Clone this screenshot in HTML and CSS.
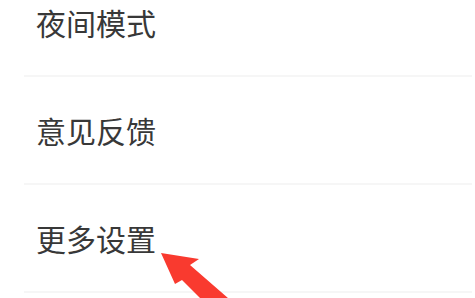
FILE: index.html
```html
<!DOCTYPE html>
<html lang="zh-CN">
<head>
<meta charset="utf-8">
<title>设置</title>
<link rel="stylesheet" href="styles.css">
</head>
<body>
<div class="page">
  <ul class="menu">
    <li class="menu-item"><span class="label">夜间模式</span></li>
    <li class="menu-item"><span class="label">意见反馈</span></li>
    <li class="menu-item"><span class="label">更多设置</span></li>
  </ul>
  <svg class="arrow" width="475" height="298" viewBox="0 0 475 298" aria-hidden="true">
    <polygon points="161,253 199,259 190,265 236,305 207,305 182,280 175,284" fill="#f93a2f"/>
  </svg>
</div>
</body>
</html>
```
FILE: styles.css
```css
html, body {
  margin: 0;
  padding: 0;
  background: #ffffff;
}
.page {
  position: relative;
  width: 475px;
  height: 298px;
  overflow: hidden;
  font-family: "Noto Sans CJK SC", "Noto Sans", sans-serif;
}
.menu {
  list-style: none;
  margin: -31px 0 0 0;
  padding: 0 3px 0 24px;
}
.menu-item {
  display: flex;
  align-items: center;
  height: 106px;
  padding-left: 12px;
  border-bottom: 2px solid #f6f6f6;
}
.label {
  font-size: 30px;
  line-height: 1;
  color: #383838;
}
.arrow {
  position: absolute;
  top: 0;
  left: 0;
  pointer-events: none;
}
```
